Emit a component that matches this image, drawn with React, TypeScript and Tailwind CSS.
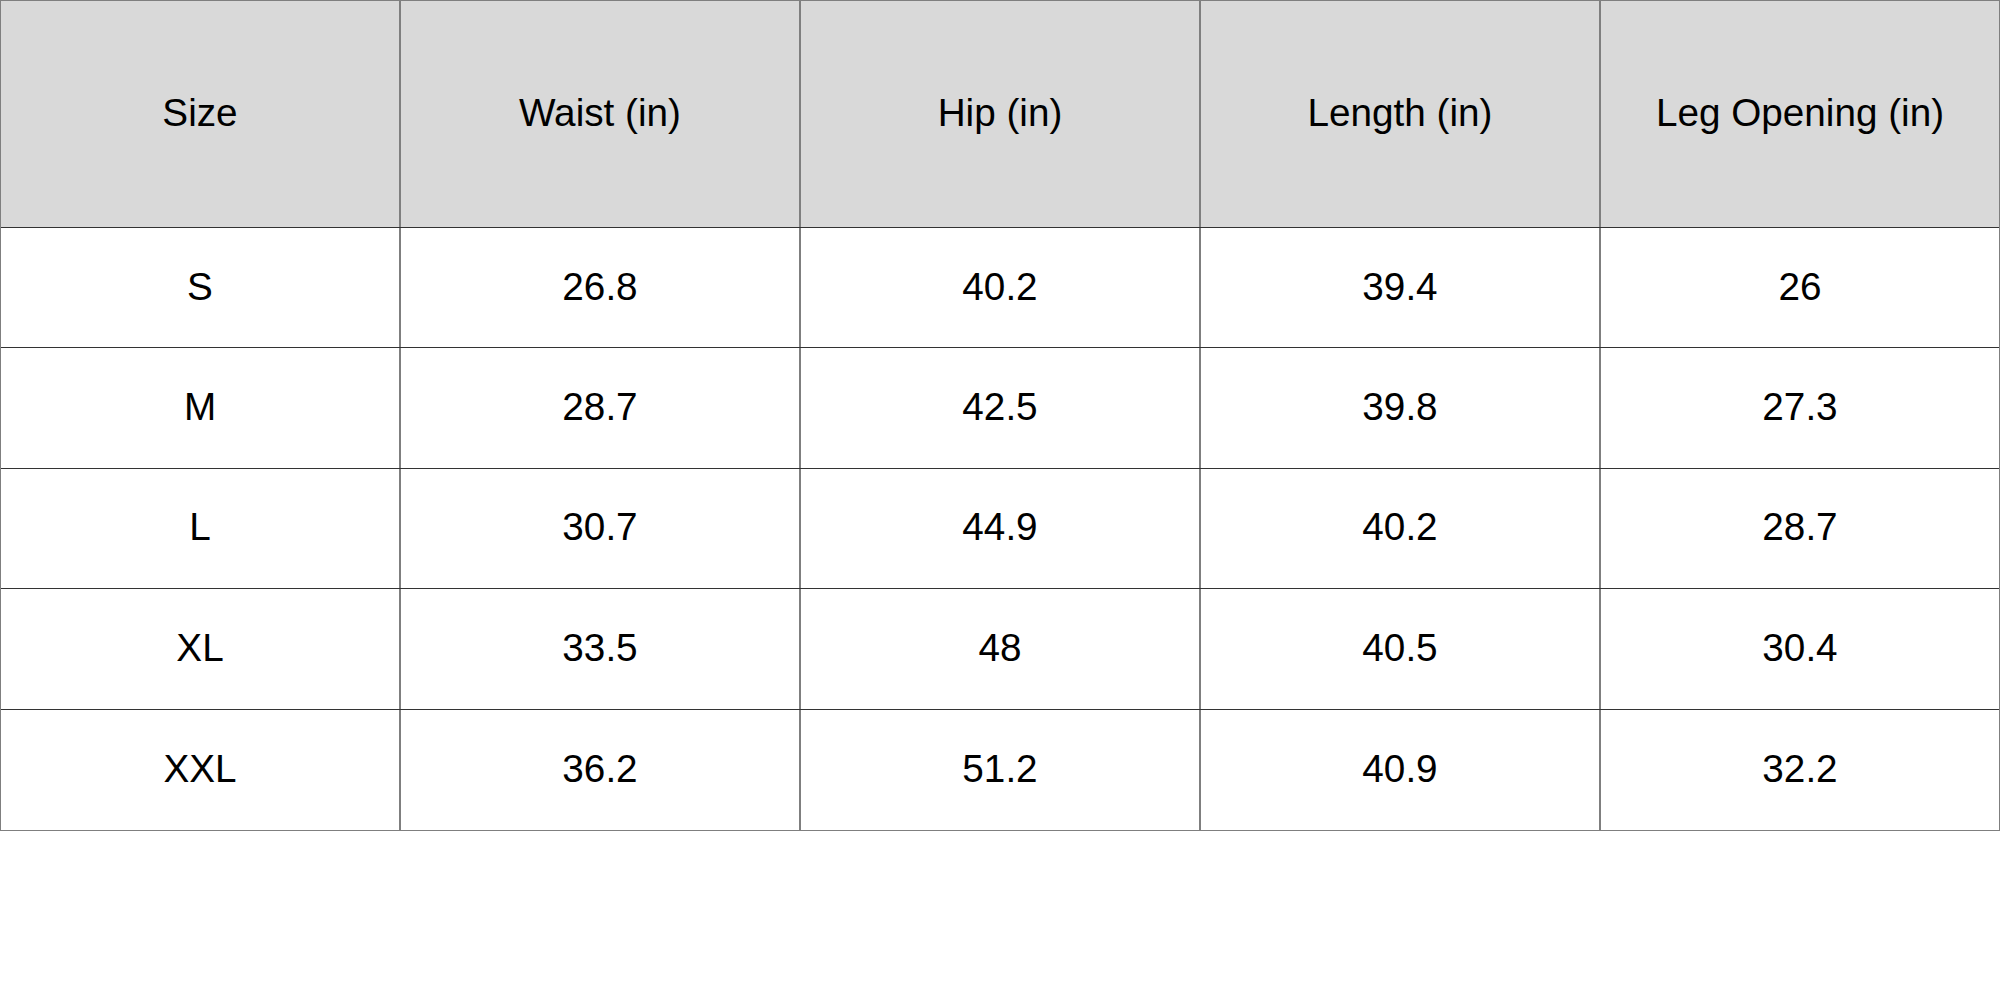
const headers = ["Size", "Waist (in)", "Hip (in)", "Length (in)", "Leg Opening (in)"];

const rows = [
  ["S", "26.8", "40.2", "39.4", "26"],
  ["M", "28.7", "42.5", "39.8", "27.3"],
  ["L", "30.7", "44.9", "40.2", "28.7"],
  ["XL", "33.5", "48", "40.5", "30.4"],
  ["XXL", "36.2", "51.2", "40.9", "32.2"],
];

export default function App() {
  return (
    <div className="w-[2000px] h-[1000px] bg-white font-['Liberation_Sans',Arial,sans-serif] text-black text-[38.7px]">
      <div className="flex flex-col border border-[#7f7f7f] border-b-[1.5px]">
        <div className="flex h-[227px] bg-[#d9d9d9] border-b border-[#333333]">
          {headers.map((h, j) => (
            <div
              key={h}
              className={`flex-1 flex items-center justify-center pb-[2px] ${j < headers.length - 1 ? "border-r-2 border-[#7f7f7f]" : ""}`}
            >
              {h}
            </div>
          ))}
        </div>
        {rows.map((r, i) => (
          <div
            key={i}
            className={`flex h-[120.4px] ${i < rows.length - 1 ? "border-b border-[#333333]" : ""}`}
          >
            {r.map((c, j) => (
              <div
                key={j}
                className={`flex-1 flex items-center justify-center pb-[2px] ${j < r.length - 1 ? "border-r-2 border-[#7f7f7f]" : ""}`}
              >
                {c}
              </div>
            ))}
          </div>
        ))}
      </div>
    </div>
  );
}
